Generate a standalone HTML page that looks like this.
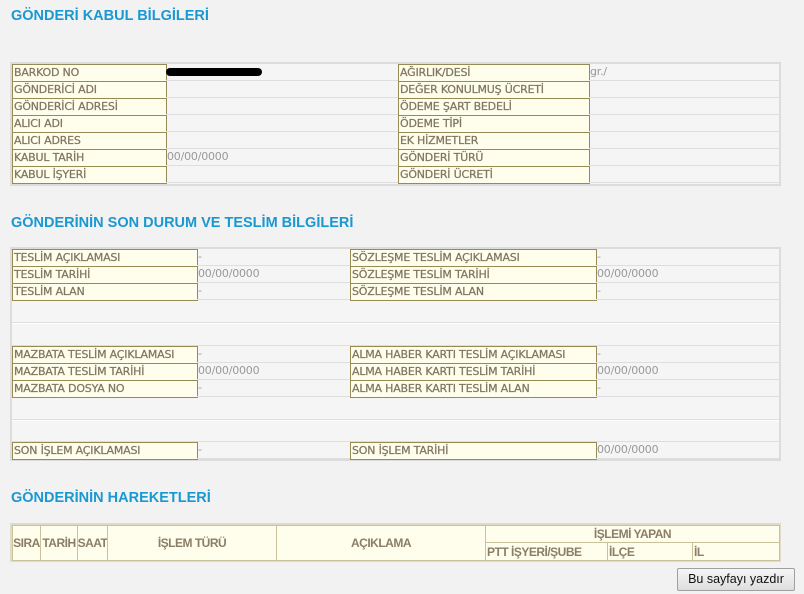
<!DOCTYPE html>
<html><head><meta charset="utf-8"><style>
body{margin:0;width:804px;height:594px;background:#f2f2f2;font-family:"Liberation Sans",sans-serif;position:relative;overflow:hidden}
.h{position:absolute;left:11px;color:#1a98d2;font-weight:bold;font-size:14.5px;font-family:"Liberation Sans",sans-serif}
.t{position:absolute;background:#f5f5f5;border:2px solid #dcdcdc;box-sizing:border-box}
.c{position:absolute;box-sizing:border-box;font-family:"DejaVu Sans",sans-serif;font-size:11px;line-height:16px;padding-left:1px;white-space:nowrap;overflow:hidden;letter-spacing:-0.2px}
.l{background:#fffdec;border:1px solid #968a55;color:#7f7660;-webkit-text-stroke:0.25px #7f7660}
.v{border-bottom:1px solid #dedede;color:#999}
.g{font-size:12px;font-weight:bold;color:#8a7f66;background:#fffdec;border:1px solid #c9c29a;text-align:center;position:absolute;box-sizing:border-box;display:flex;align-items:center;justify-content:center;white-space:nowrap;letter-spacing:-0.5px}
</style></head><body>
<div class="h" style="top:8px">GÖNDERİ KABUL BİLGİLERİ</div>
<div class="t" style="left:10px;top:62px;width:771px;height:124px"></div>
<div class="h" style="top:215px">GÖNDERİNİN SON DURUM VE TESLİM BİLGİLERİ</div>
<div class="t" style="left:10px;top:247px;width:771px;height:214px"></div>
<div class="h" style="top:490px">GÖNDERİNİN HAREKETLERİ</div>
<div class="t" style="left:10px;top:523px;width:771px;height:39px;border-color:#dedbc8"></div>
<script>
function cell(x,y,w,h,cls,txt){var d=document.createElement('div');d.className=cls;d.style.cssText='left:'+x+'px;top:'+y+'px;width:'+w+'px;height:'+h+'px';d.textContent=txt;document.body.appendChild(d);return d;}
var L1=['BARKOD NO','GÖNDERİCİ ADI','GÖNDERİCİ ADRESİ','ALICI ADI','ALICI ADRES','KABUL TARİH','KABUL İŞYERİ'];
var V1=['','','','','','00/00/0000',''];
var L2=['AĞIRLIK/DESİ','DEĞER KONULMUŞ ÜCRETİ','ÖDEME ŞART BEDELİ','ÖDEME TİPİ','EK HİZMETLER','GÖNDERİ TÜRÜ','GÖNDERİ ÜCRETİ'];
for(var i=0;i<7;i++){var y=64+i*17;
cell(12,y,155,18,'c l',L1[i]);cell(166,y,232,17,'c v',V1[i]);
cell(398,y,192,18,'c l',L2[i]);cell(589,y,190,17,'c v',i==0?'gr./':'');}
var rows=[[249,'TESLİM AÇIKLAMASI','-','SÖZLEŞME TESLİM AÇIKLAMASI','-'],[266,'TESLİM TARİHİ','00/00/0000','SÖZLEŞME TESLİM TARİHİ','00/00/0000'],[283,'TESLİM ALAN','-','SÖZLEŞME TESLİM ALAN','-'],
[346,'MAZBATA TESLİM AÇIKLAMASI','-','ALMA HABER KARTI TESLİM AÇIKLAMASI','-'],[363,'MAZBATA TESLİM TARİHİ','00/00/0000','ALMA HABER KARTI TESLİM TARİHİ','00/00/0000'],[380,'MAZBATA DOSYA NO','-','ALMA HABER KARTI TESLİM ALAN','-'],
[442,'SON İŞLEM AÇIKLAMASI','-','SON İŞLEM TARİHİ','00/00/0000']];
rows.forEach(function(r){cell(12,r[0],186,18,'c l',r[1]);cell(197,r[0],153,17,'c v',r[2]);cell(350,r[0],247,18,'c l',r[3]);cell(596,r[0],183,17,'c v',r[4]);});
[[300,23,0],[323,23,1],[397,23,0],[420,22,1]].forEach(function(b){var d=cell(12,b[0],767,b[1],'c v','');if(b[2])d.style.borderTop='1px solid #fff';});
[[12,28,'SIRA'],[40,37,'TARİH'],[77,30,'SAAT'],[107,169,'İŞLEM TÜRÜ'],[276,209,'AÇIKLAMA']].forEach(function(c){cell(c[0],525,c[1]+1,36,'g',c[2]);});
cell(485,525,295,18,'g','İŞLEMİ YAPAN');
[[485,123,'PTT İŞYERİ/ŞUBE'],[607,86,'İLÇE'],[692,88,'İL']].forEach(function(c){var d=cell(c[0],542,c[1],19,'g',c[2]);d.style.justifyContent='flex-start';d.style.paddingLeft='1px';});
</script>
<div style="position:absolute;left:166px;top:68px;width:96px;height:8px;background:#000;border-radius:4px"></div>
<div style="position:absolute;left:677px;top:568px;width:118px;height:23px;box-sizing:border-box;border:1px solid #a0a0a0;border-radius:2px;background:linear-gradient(#f6f6f6,#dedede);font-size:12.5px;color:#111;text-align:center;line-height:21px">Bu sayfayı yazdır</div>
</body></html>
